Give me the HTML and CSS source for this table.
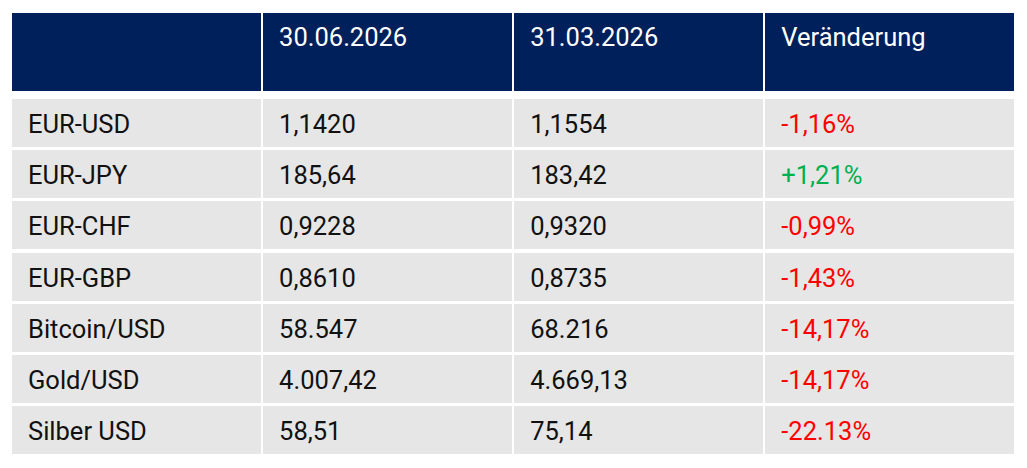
FILE: index.html
```html
<!DOCTYPE html>
<html lang="de">
<head>
<meta charset="utf-8">
<link rel="stylesheet" href="styles.css">
</head>
<body>
<div class="table">
  <div class="cell head"></div>
  <div class="cell head">30.06.2026</div>
  <div class="cell head">31.03.2026</div>
  <div class="cell head">Veränderung</div>

  <div class="cell">EUR-USD</div>
  <div class="cell">1,1420</div>
  <div class="cell">1,1554</div>
  <div class="cell neg">-1,16%</div>

  <div class="cell">EUR-JPY</div>
  <div class="cell">185,64</div>
  <div class="cell">183,42</div>
  <div class="cell pos">+1,21%</div>

  <div class="cell">EUR-CHF</div>
  <div class="cell">0,9228</div>
  <div class="cell">0,9320</div>
  <div class="cell neg">-0,99%</div>

  <div class="cell">EUR-GBP</div>
  <div class="cell">0,8610</div>
  <div class="cell">0,8735</div>
  <div class="cell neg">-1,43%</div>

  <div class="cell">Bitcoin/USD</div>
  <div class="cell">58.547</div>
  <div class="cell">68.216</div>
  <div class="cell neg">-14,17%</div>

  <div class="cell">Gold/USD</div>
  <div class="cell">4.007,42</div>
  <div class="cell">4.669,13</div>
  <div class="cell neg">-14,17%</div>

  <div class="cell">Silber USD</div>
  <div class="cell">58,51</div>
  <div class="cell">75,14</div>
  <div class="cell neg">-22.13%</div>
</div>
</body>
</html>
```

FILE: styles.css
```css
html, body {
  margin: 0;
  padding: 0;
  background: #ffffff;
}

body {
  font-family: Roboto, "Liberation Sans", sans-serif;
  font-size: 25.5px;
  color: #111111;
}

.table {
  margin: 13px 0 0 12px;
  width: 1002px;
  display: grid;
  grid-template-columns: repeat(4, 1fr);
  grid-template-rows: auto repeat(7, 48px);
  column-gap: 2.4px;
  row-gap: 3.2px;
}

.cell {
  background: #e6e6e6;
  padding: 11px 16px 0 16px;
  line-height: 29px;
  box-sizing: border-box;
}

.head {
  background: #00205b;
  color: #ffffff;
  height: 78px;
  padding-top: 10px;
  margin-bottom: 4.8px;
}

.neg {
  color: #ff0000;
}

.pos {
  color: #00b050;
}
```
